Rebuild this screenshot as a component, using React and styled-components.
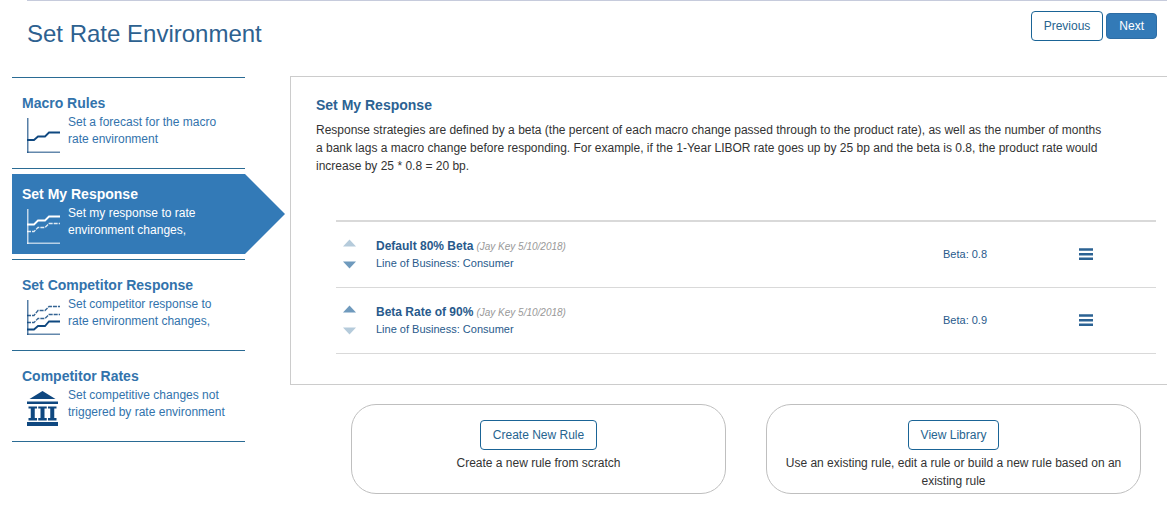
import React from "react";
import styled, { createGlobalStyle, css } from "styled-components";

const GlobalStyle = createGlobalStyle`
  * { box-sizing: border-box; }
  body {
    margin: 0;
    background: #fff;
    color: #333;
    font: 12px/18px "Liberation Sans", Arial, Helvetica, sans-serif;
  }
  h1, h2, p, ul, ol { margin: 0; padding: 0; }
  ul, ol { list-style: none; }
`;

const Page = styled.div`
  padding-left: 12px;
`;

const Header = styled.header`
  display: flex;
  justify-content: space-between;
  align-items: flex-start;
  height: 76px;
  margin-left: 15px;
  padding-right: 10px;
  border-top: 1px solid #c6cbdc;
`;

const Title = styled.h1`
  padding-top: 18px;
  color: #2d6190;
  font-size: 24px;
  line-height: 30px;
  font-weight: 400;
`;

const Actions = styled.div`
  display: flex;
  align-items: center;
  gap: 3px;
  padding-top: 10px;
`;

const Button = styled.button`
  height: 30px;
  padding: 0 12px;
  border: 1px solid #1a6496;
  border-radius: 4px;
  background: #fff;
  color: #26648f;
  font: inherit;
  cursor: pointer;

  ${(p) =>
    p.$primary &&
    css`
      height: 26px;
      border-color: #2e6da4;
      background: #337ab7;
      color: #fff;
    `}
`;

const Columns = styled.div`
  display: grid;
  grid-template-columns: 233px minmax(0, 1fr);
  column-gap: 45px;
  align-items: start;
`;

const Steps = styled.ul`
  padding-top: 1px;
`;

const Step = styled.li`
  padding: 5px 0;
  border-top: 1px solid #2a6b94;

  &:last-child {
    border-bottom: 1px solid #2a6b94;
  }
`;

const StepLink = styled.a`
  position: relative;
  display: grid;
  grid-template-columns: 46px 1fr;
  align-content: start;
  height: 80px;
  padding: 11px 14px 0 10px;
  color: #3273ac;
  text-decoration: none;

  &[aria-current] {
    background: #337ab7;
    color: #fff;
  }

  &[aria-current]::after {
    content: "";
    position: absolute;
    top: 0;
    left: 100%;
    border-style: solid;
    border-width: 40px 0 40px 40px;
    border-color: transparent transparent transparent #337ab7;
  }
`;

const StepName = styled.strong`
  grid-column: 1 / -1;
  font-size: 14px;
  line-height: 19px;
`;

const StepText = styled.span`
  padding-top: 1px;
  line-height: 17px;
`;

const StepIcon = styled.svg`
  display: block;
  margin: 5px 0 0 5px;
  color: ${(p) => (p.$active ? "#fff" : "#0f4880")};
`;

const Panel = styled.section`
  padding: 19px 0 30px 25px;
  border: 1px solid #ccc;
  border-right: 0;
`;

const PanelTitle = styled.h2`
  color: #2b6293;
  font-size: 14px;
  line-height: 19px;
`;

const Intro = styled.p`
  max-width: 790px;
  padding: 6px 0 0;
`;

const Rules = styled.ol`
  margin: 45px 11px 0 20px;
  border-top: 2px solid #d9d9d9;
`;

const Rule = styled.li`
  display: grid;
  grid-template-columns: 40px minmax(0, 1fr) 136px 77px;
  align-items: center;
  height: 66px;
  border-bottom: 1px solid #d9d9d9;
  color: #285a8c;
  font-size: 11px;
  line-height: 17px;
`;

const Order = styled.div`
  display: grid;
  gap: 14px;
  padding: 0 0 2px 7px;
`;

const IconButton = styled.button`
  display: block;
  width: 14px;
  padding: 0;
  border: 0;
  background: none;
  color: ${(p) => p.$color || "#2b6293"};
  cursor: pointer;

  svg { display: block; }
`;

const RuleHead = styled.p`
  line-height: 16px;
  padding-top: 1px;
`;

const RuleName = styled.strong`
  font-size: 12px;
`;

const Author = styled.em`
  color: #999;
  font-size: 10px;
`;

const Cards = styled.div`
  display: grid;
  grid-template-columns: 1fr 1fr;
  gap: 40px;
  padding: 19px 26px 13px 61px;
`;

const Card = styled.div`
  display: flex;
  flex-direction: column;
  align-items: center;
  gap: 4px;
  min-height: 90px;
  padding: 15px 18px 2px;
  border: 1px solid #bfbfbf;
  border-radius: 25px;
  text-align: center;
`;

function ChartIcon({ active, lines }) {
  return (
    <StepIcon $active={active} width="33" height="36" viewBox="0 0 33 36" fill="none" stroke="currentColor" aria-hidden="true">
      <path d="M.75 0V35" strokeOpacity=".7" strokeWidth="1.5" />
      <path d="M0 34.25H33" strokeOpacity=".65" strokeWidth="1.5" />
      {lines.map((line) => (
        <path
          key={line.d}
          d={line.d}
          strokeWidth={line.dashed ? 1.3 : 1.8}
          strokeOpacity={line.dashed ? 0.85 : 1}
          strokeDasharray={line.dashed ? "4 1" : undefined}
        />
      ))}
    </StepIcon>
  );
}

function BankIcon() {
  return (
    <StepIcon width="32" height="36" viewBox="0 0 32 36" fill="currentColor" aria-hidden="true">
      <path d="M15.5 0 28.500 8H2.500Z" />
      <path d="M0 10.5H31V13H0Z" />
      {[1.5, 11.25, 21].map((x) => (
        <path key={x} d={`M${x} 15.5h8.500v2h-2.250v9.500h2.250v2.500h-8.500v-2.500h2.250v-9.500h-2.250Z`} />
      ))}
      <path d="M0 31H31V35H0Z" />
    </StepIcon>
  );
}

const steps = [
  {
    name: "Macro Rules",
    text: "Set a forecast for the macro rate environment",
    lines: [{ d: "M0 22H7L11 18.500H18L22 14.500H33" }],
  },
  {
    name: "Set My Response",
    text: "Set my response to rate environment changes,",
    active: true,
    lines: [
      { d: "M0 15.500H7L11 11.500H18L22 7.500H33" },
      { d: "M0 22.500H7L11 18.500H18L22 14.500H33", dashed: true },
    ],
  },
  {
    name: "Set Competitor Response",
    text: "Set competitor response to rate environment changes,",
    lines: [
      { d: "M0 15.500H7L11 10.500H18L22 6.500H33", dashed: true },
      { d: "M0 22.500H7L11 18.500H18L22 14.500H33", dashed: true },
      { d: "M0 29.500H7L11 26H18L22 21.500H33" },
    ],
  },
  {
    name: "Competitor Rates",
    text: "Set competitive changes not triggered by rate environment",
  },
];

const rules = [
  { name: "Default 80% Beta", beta: "0.8" },
  { name: "Beta Rate of 90%", beta: "0.9" },
];

const STRONG_ARROW = "#6f9abd";
const FAINT_ARROW = "#b5cbdb";

export default function App() {
  return (
    <>
      <GlobalStyle />
      <Page>
        <Header>
          <Title>Set Rate Environment</Title>
          <Actions>
            <Button type="button">Previous</Button>
            <Button type="button" $primary>Next</Button>
          </Actions>
        </Header>
        <Columns>
          <nav aria-label="Steps">
            <Steps>
              {steps.map((step) => (
                <Step key={step.name}>
                  <StepLink href="#" aria-current={step.active ? "step" : undefined}>
                    <StepName>{step.name}</StepName>
                    {step.lines ? <ChartIcon active={step.active} lines={step.lines} /> : <BankIcon />}
                    <StepText>{step.text}</StepText>
                  </StepLink>
                </Step>
              ))}
            </Steps>
          </nav>
          <main>
            <Panel>
              <PanelTitle>Set My Response</PanelTitle>
              <Intro>
                Response strategies are defined by a beta (the percent of each macro change passed through to the
                product rate), as well as the number of months a bank lags a macro change before responding. For
                example, if the 1-Year LIBOR rate goes up by 25 bp and the beta is 0.8, the product rate would
                increase by 25 * 0.8 = 20 bp.
              </Intro>
              <Rules>
                {rules.map((rule, i) => (
                  <Rule key={rule.name}>
                    <Order>
                      <IconButton type="button" aria-label="Move up" $color={i > 0 ? STRONG_ARROW : FAINT_ARROW}>
                        <svg width="14" height="8" viewBox="0 0 14 8"><path d="M0 7.500 6.500 .5 13 7.500Z" fill="currentColor" /></svg>
                      </IconButton>
                      <IconButton
                        type="button"
                        aria-label="Move down"
                        $color={i < rules.length - 1 ? STRONG_ARROW : FAINT_ARROW}
                      >
                        <svg width="14" height="8" viewBox="0 0 14 8"><path d="M0 .5 6.500 7.500 13 .5Z" fill="currentColor" /></svg>
                      </IconButton>
                    </Order>
                    <div>
                      <RuleHead>
                        <RuleName>{rule.name}</RuleName> <Author>(Jay Key 5/10/2018)</Author>
                      </RuleHead>
                      <p>Line of Business: Consumer</p>
                    </div>
                    <span>Beta: {rule.beta}</span>
                    <IconButton type="button" aria-label="Rule menu">
                      <svg width="14" height="14" viewBox="0 0 14 14">
                        <path d="M0 .2h14v2.500H0ZM0 4.900h14v2.500H0ZM0 9.600h14v2.500H0Z" fill="currentColor" />
                      </svg>
                    </IconButton>
                  </Rule>
                ))}
              </Rules>
            </Panel>
            <Cards>
              <Card>
                <Button type="button">Create New Rule</Button>
                <p>Create a new rule from scratch</p>
              </Card>
              <Card>
                <Button type="button">View Library</Button>
                <p>Use an existing rule, edit a rule or build a new rule based on an existing rule</p>
              </Card>
            </Cards>
          </main>
        </Columns>
      </Page>
    </>
  );
}
